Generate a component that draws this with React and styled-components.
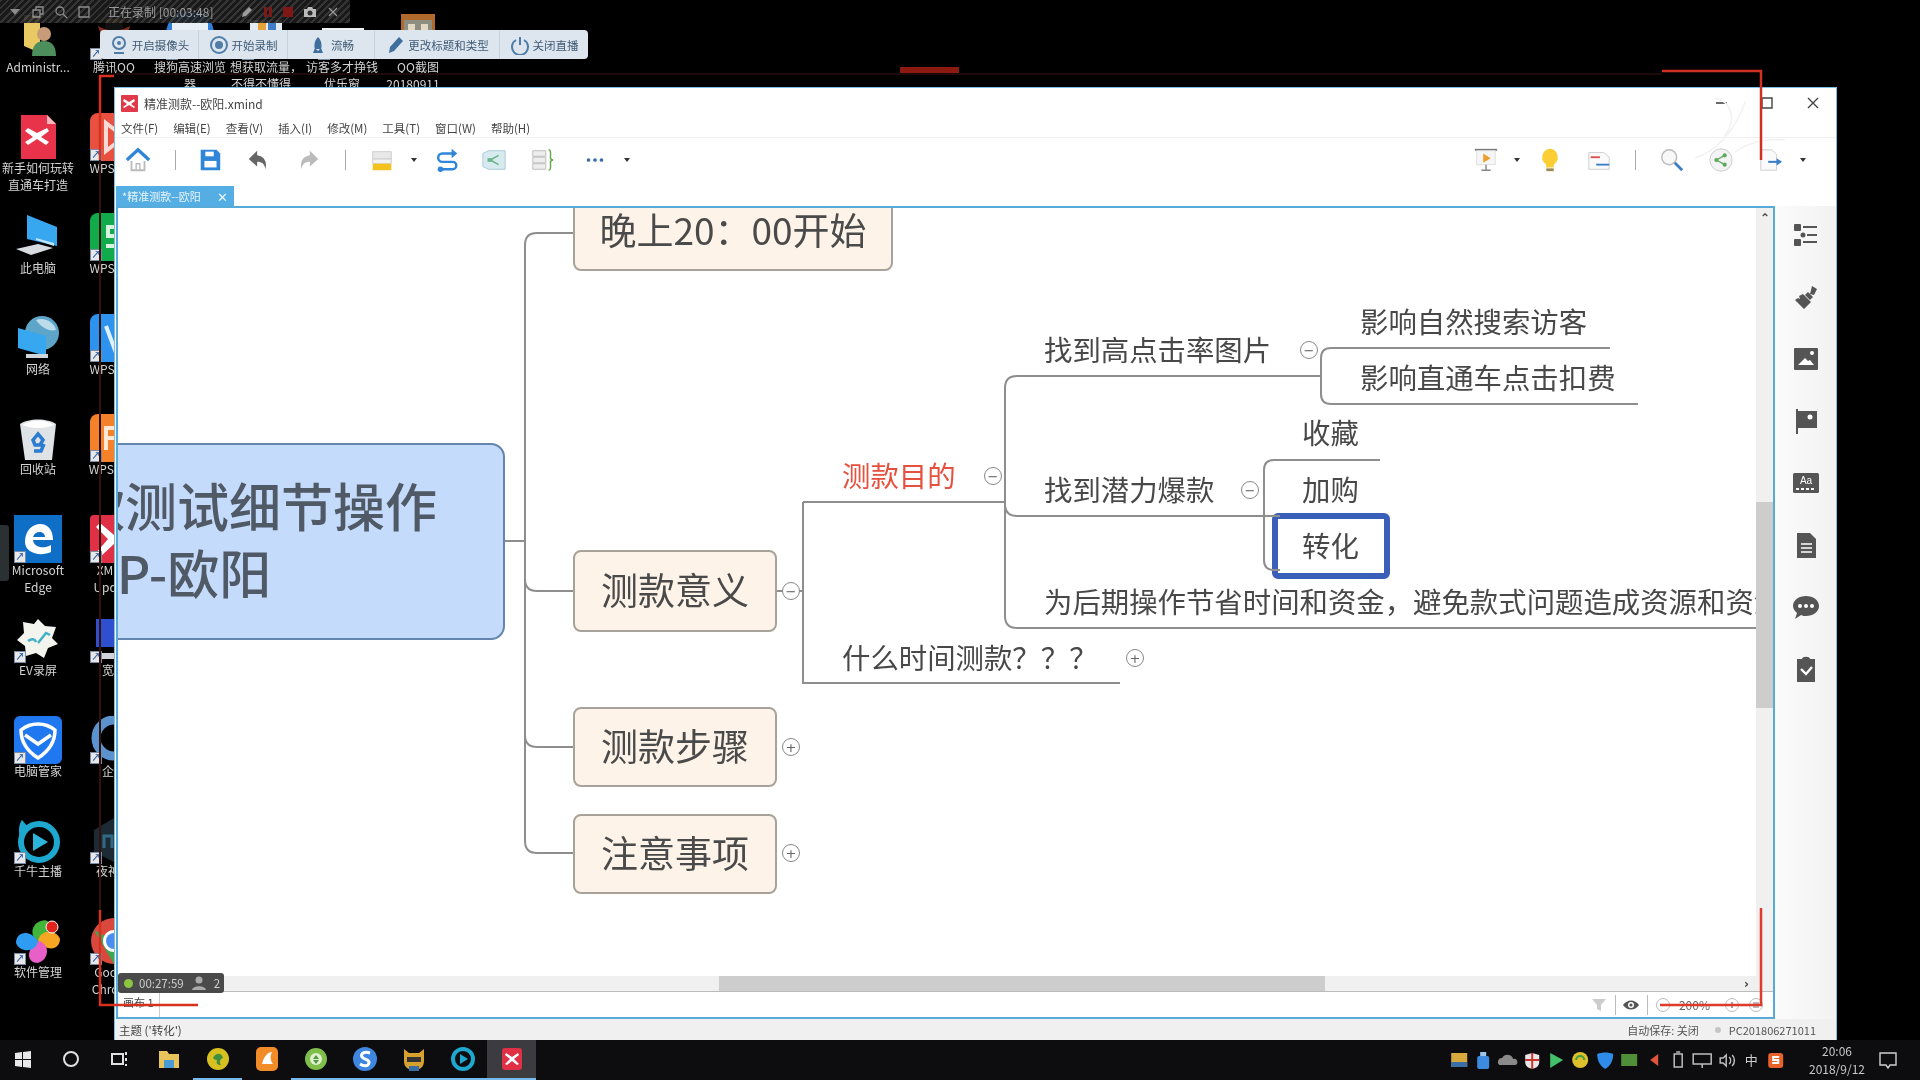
import React from "react";
import styled, { createGlobalStyle } from "styled-components";

const GlobalStyle = createGlobalStyle`
  html, body {
    margin: 0;
    padding: 0;
    background: #000;
    overflow: hidden;
  }
  * {
    box-sizing: border-box;
  }
  body {
    font-family: "Noto Sans CJK SC", "Noto Sans", sans-serif;
  }
`;

const Screen = styled.div`
  position: relative;
  width: 1920px;
  height: 1080px;
  display: flex;
  flex-direction: column;
  overflow: hidden;
  background: #000;
  filter: blur(0.55px);
`;

/* ---------- desktop ---------- */

const Desktop = styled.div`
  position: relative;
  flex: 1;
  padding-top: 2px;
`;

const IconRow = styled.div`
  display: flex;
  height: 100.5px;
`;

const DesktopItem = styled.div`
  width: 76px;
  padding-top: 10px;
  display: flex;
  flex-direction: column;
  align-items: center;
`;

const GlyphBox = styled.div`
  position: relative;
  width: 48px;
  height: 48px;
`;

const ShortcutMark = styled.span`
  position: absolute;
  left: 0;
  bottom: 0;
  width: 12px;
  height: 12px;
  background: #e8e8e8;
  border: 1px solid #7a8ba5;
  color: #2a5ca8;
  font-size: 9px;
  line-height: 10px;
  text-align: center;
  font-weight: 700;
`;

const DesktopLabel = styled.span`
  margin-top: -2px;
  width: 76px;
  color: #d4d4d4;
  font-size: 12px;
  line-height: 17px;
  text-align: center;
  white-space: pre-line;
`;

const DockHandle = styled.div`
  position: absolute;
  left: 0;
  top: 525px;
  width: 9px;
  height: 56px;
  border-radius: 0 3px 3px 0;
  background: #2b3033;
`;

const desktopGlyphs = {
  admin: (
    <svg viewBox="0 0 48 48">
      <path d="M10 3h16v38L10 34z" fill="#e8c964" />
      <circle cx="30" cy="22" r="7" fill="#c79a78" />
      <path d="M18 44c0-12 6-15 12-15s12 3 12 15z" fill="#4c8f5c" />
    </svg>
  ),
  xfile: (
    <svg viewBox="0 0 48 48">
      <path d="M7 2h26l9 9v35H7z" fill="#e8334a" />
      <path d="M33 2l9 9h-9z" fill="#f4b7be" />
      <path d="M14 15l9 5 10-5 2 3-8 6 8 5-3 3-9-6-9 6-3-3 8-5-8-6z" fill="#fff" />
    </svg>
  ),
  pc: (
    <svg viewBox="0 0 48 48">
      <path d="M13 2l30 12v19L13 26z" fill="#37a7ef" />
      <path d="M40 30L22 25v2l18 6z" fill="#bfe4fa" />
      <path d="M2 36l22-5 15 4-22 7z" fill="#d8dce0" />
    </svg>
  ),
  net: (
    <svg viewBox="0 0 48 48">
      <circle cx="28" cy="19" r="17" fill="#5da5c9" />
      <path d="M22 6c8-3 18 2 20 10-7 2-15-3-20-10z" fill="#bcdcec" />
      <path d="M4 14l28 8v20L4 34z" fill="#37a7ef" />
      <path d="M12 40h22v4H12z" fill="#cfd6dc" />
    </svg>
  ),
  bin: (
    <svg viewBox="0 0 48 48">
      <path d="M6 10c8-6 28-6 36 0l-4 36H11z" fill="#dfe3e6" />
      <path d="M8 11c10-6 22-6 32 0-10 4-22 4-32 0z" fill="#fff" />
      <path d="M19 26l5-6 5 6-3 5h-5zM30 30l-3 7h-7" stroke="#2b7bd0" strokeWidth="3.5" fill="none" />
    </svg>
  ),
  edge: (
    <svg viewBox="0 0 48 48">
      <rect width="48" height="48" fill="#0f6fc6" />
      <path d="M11 27c0-12 8-18 15-18 8 0 13 6 13 16H19c1 8 11 9 18 5v7c-11 5-26 1-26-10zm8-5h12c0-6-10-7-12 0z" fill="#fff" />
    </svg>
  ),
  ev: (
    <svg viewBox="0 0 48 48">
      <path d="M24 4l7 7 11 1-4 11 6 6-10 4-4 10-8-5-10 3-1-10-8-6 7-7-1-11 11 2z" fill="#f4f4ee" />
      <path d="M14 26c4-3 7-2 8 1M24 28l8-10 4 2" stroke="#3fb0c8" strokeWidth="2.5" fill="none" />
    </svg>
  ),
  guard: (
    <svg viewBox="0 0 48 48">
      <rect width="48" height="48" rx="6" fill="#1f78f0" />
      <path d="M7 14c10-8 24-8 34 0 0 12-6 21-17 28C13 35 7 26 7 14z" fill="none" stroke="#fff" strokeWidth="3.5" />
      <path d="M11 19l13 9 13-9" fill="none" stroke="#fff" strokeWidth="3.5" />
    </svg>
  ),
  qianniu: (
    <svg viewBox="0 0 48 48">
      <circle cx="25" cy="26" r="18" fill="none" stroke="#1ea8cf" strokeWidth="6" />
      <path d="M6 24C4 14 5 8 8 4l6 7z" fill="#1ea8cf" />
      <path d="M19 17l15 9-15 9z" fill="#2cb4dc" />
    </svg>
  ),
  soft: (
    <svg viewBox="0 0 48 48">
      <path d="M24 24C12 22 12 6 24 2c10 0 12 14 0 22z" fill="#43b53a" transform="rotate(20 24 24)" />
      <path d="M24 24c2-12 18-12 22-2 0 10-12 14-22 2z" fill="#f5a623" />
      <path d="M24 24c12 2 12 18 0 22-12 0-12-14 0-22z" fill="#e85fc8" />
      <path d="M24 24C22 36 6 36 2 26c0-12 14-14 22-2z" fill="#2e9cf0" />
      <circle cx="38" cy="10" r="6" fill="#e3241b" stroke="#fff" />
    </svg>
  ),
  wpsRed: (
    <svg viewBox="0 0 48 48">
      <rect width="48" height="48" rx="8" fill="#e8503f" />
      <path d="M16 10l18 14-18 14z" fill="none" stroke="#fbd9d4" strokeWidth="4" />
    </svg>
  ),
  wpsGreen: (
    <svg viewBox="0 0 48 48">
      <rect width="48" height="48" rx="8" fill="#12ab4b" />
      <path d="M36 14H18v9h18v10H16" fill="none" stroke="#d8f5e2" strokeWidth="4" />
    </svg>
  ),
  wpsBlue: (
    <svg viewBox="0 0 48 48">
      <rect width="48" height="48" rx="8" fill="#2e93ee" />
      <path d="M16 12l9 24 10-24" fill="none" stroke="#e2f1ff" strokeWidth="4" />
    </svg>
  ),
  wpsOrange: (
    <svg viewBox="0 0 48 48">
      <rect width="48" height="48" rx="8" fill="#f5822a" />
      <path d="M38 14H16v22M16 24h18" fill="none" stroke="#ffe8d6" strokeWidth="4" />
    </svg>
  ),
  xupd: (
    <svg viewBox="0 0 48 48">
      <rect width="48" height="48" rx="4" fill="#e03045" />
      <path d="M10 8l14 12L38 8l4 4-12 12 12 14-4 4-14-13-14 13-4-4 12-14L6 12z" fill="#fff" />
    </svg>
  ),
  wide: (
    <svg viewBox="0 0 48 48">
      <path d="M6 4h36v28H6z" fill="#2d4fd0" />
      <path d="M10 38h30v6H10z" fill="#cfd3da" />
    </svg>
  ),
  qq: (
    <svg viewBox="0 0 48 48">
      <circle cx="24" cy="22" r="18" fill="none" stroke="#5b93cf" strokeWidth="9" />
      <path d="M18 38h22v6H18z" fill="#5b93cf" />
    </svg>
  ),
  nox: (
    <svg viewBox="0 0 48 48">
      <path d="M24 2l20 12v22L24 46 4 36V14z" fill="#1c2a33" />
      <path d="M14 32V20h8v12M28 20h8v12h-8z" fill="none" stroke="#2f6a86" strokeWidth="3" />
    </svg>
  ),
  chrome: (
    <svg viewBox="0 0 48 48">
      <circle cx="24" cy="24" r="23" fill="#d8483c" />
      <path d="M4 13l20 34 20-23H24z" fill="#3aa853" />
      <circle cx="24" cy="24" r="11" fill="#fff" />
      <circle cx="24" cy="24" r="8" fill="#4a8df0" />
    </svg>
  ),
  penguin: (
    <svg viewBox="0 0 48 48">
      <path d="M14 22c0-26 20-26 20 0 6 8 6 16 2 16H12c-4 0-4-8 2-16z" fill="#111" />
      <path d="M8 14c10 6 22 6 32 0l-4 12H12z" fill="#8a3020" />
      <path d="M16 7h16v4H16z" fill="#d4a341" />
    </svg>
  ),
  sogou: (
    <svg viewBox="0 0 48 48">
      <circle cx="24" cy="22" r="24" fill="#2f7fd8" />
      <path d="M6 10h36v10H6z" fill="#e8eef5" />
    </svg>
  ),
  book: (
    <svg viewBox="0 0 48 48">
      <path d="M8 8h32v36H8z" fill="#e4ebf0" />
      <path d="M16 8h8v20h-8z" fill="#e8a23a" />
      <path d="M26 8h8v20h-8z" fill="#3f7cc9" />
    </svg>
  ),
  paper: (
    <svg viewBox="0 0 48 48">
      <path d="M4 16h42v28H4z" fill="#eef1f4" />
      <path d="M10 20h30v3H10z" fill="#9fb2c5" />
    </svg>
  ),
  code: (
    <svg viewBox="0 0 48 48">
      <rect x="7" y="2" width="34" height="34" fill="#b06a2c" />
      <rect x="10" y="8" width="28" height="26" fill="#8d8d82" />
      <path d="M14 12h7v7h-7zM27 12h7v7h-7zM14 24h7v7h-7zM26 25h8v6h-8z" fill="#e1d7c2" />
    </svg>
  ),
};

const desktopRows = [
  [
    ["admin", "Administr...", false],
    ["penguin", "腾讯QQ", true],
    ["sogou", "搜狗高速浏览\n器", true],
    ["book", "想获取流量，\n不得不懂得...", true],
    ["paper", "访客多才挣钱\n优乐窗", true],
    ["code", "QQ截图\n20180911...", false],
  ],
  [["xfile", "新手如何玩转\n直通车打造", false], ["wpsRed", "WPS演示", true]],
  [["pc", "此电脑", false], ["wpsGreen", "WPS表格", true]],
  [["net", "网络", false], ["wpsBlue", "WPS文字", true]],
  [["bin", "回收站", false], ["wpsOrange", "WPS PDF", true]],
  [["edge", "Microsoft\nEdge", true], ["xupd", "XMind\nUpdate", true]],
  [["ev", "EV录屏", true], ["wide", "宽带", true]],
  [["guard", "电脑管家", true], ["qq", "企业", true]],
  [["qianniu", "千牛主播", true], ["nox", "夜神模", true]],
  [["soft", "软件管理", true], ["chrome", "Google\nChrome", true]],
];

/* ---------- recorder overlays ---------- */

const RecorderStrip = styled.div`
  position: absolute;
  left: 0;
  top: 0;
  width: 350px;
  height: 23px;
  display: flex;
  align-items: center;
  gap: 9px;
  padding-left: 8px;
  color: #a8a8a8;
  font-size: 12px;
  background: repeating-linear-gradient(135deg, #3a3a3a 0 2px, #1c1c1c 2px 5px);
  opacity: 0.92;
`;

const StripIcon = styled.svg`
  width: ${({ $w }) => $w || 14}px;
  height: 14px;
  flex: none;
`;

const StripTime = styled.span`
  margin: 0 18px 0 8px;
  white-space: nowrap;
`;

const LiveBar = styled.div`
  position: absolute;
  left: 100px;
  top: 30px;
  width: 488px;
  height: 29px;
  display: flex;
  border-radius: 4px;
  background: #dde6ee;
`;

const LiveButton = styled.div`
  width: ${({ $w }) => $w}px;
  display: flex;
  align-items: center;
  justify-content: center;
  gap: 3px;
  color: #3f5a76;
  font-size: 11.5px;
  white-space: nowrap;
  &:not(:last-child) {
    border-right: 1px solid #c6d2dd;
  }
`;

const LiveIcon = styled.svg`
  width: 20px;
  height: 20px;
  flex: none;
`;

const liveButtons = [
  [99, "开启摄像头", <g key="a"><circle cx="10" cy="8" r="6" fill="none" stroke="#4f7da8" strokeWidth="2" /><circle cx="10" cy="8" r="2" fill="#4f7da8" /><path d="M5 18h10" stroke="#4f7da8" strokeWidth="2" /></g>],
  [89, "开始录制", <g key="b"><circle cx="10" cy="10" r="8" fill="none" stroke="#4f7da8" strokeWidth="2" /><circle cx="10" cy="10" r="4" fill="#4f7da8" /></g>],
  [87, "流畅", <path key="c" d="M10 2c4 4 4 9 3 12H7C6 11 6 6 10 2zM5 18l2-5 3 3 3-3 2 5z" fill="#3f6f9e" />],
  [125, "更改标题和类型", <path key="d" d="M4 18l1-6L14 2l4 4-9 10z" fill="#3f6f9e" />],
  [88, "关闭直播", <g key="e"><path d="M6 5a8 8 0 1 0 8 0" fill="none" stroke="#4f7da8" strokeWidth="2" /><path d="M10 2v8" stroke="#4f7da8" strokeWidth="2" /></g>],
];

const RedFrame = styled.svg`
  position: absolute;
  left: 0;
  top: 0;
  width: 1920px;
  height: 1080px;
  pointer-events: none;
`;

/* ---------- xmind window ---------- */

const Window = styled.div`
  position: absolute;
  left: 114px;
  top: 87px;
  width: 1723px;
  height: 953px;
  display: flex;
  flex-direction: column;
  background: #fff;
  border: 1px solid #7cc0e6;
  border-bottom: none;
`;

const Watermark = styled.svg`
  position: absolute;
  left: 1560px;
  top: 4px;
  width: 120px;
  height: 80px;
  pointer-events: none;
`;

const TitleBar = styled.div`
  height: 30px;
  flex: none;
  display: flex;
  align-items: center;
  padding-left: 6px;
  color: #444;
  font-size: 12px;
`;

const AppMark = styled.svg`
  width: 17px;
  height: 17px;
  margin-right: 6px;
`;

const WindowControls = styled.div`
  margin-left: auto;
  display: flex;
`;

const WindowControl = styled.svg`
  width: 46px;
  height: 16px;
`;

const MenuBar = styled.div`
  height: 20px;
  flex: none;
  display: flex;
  align-items: center;
  gap: 15px;
  padding-left: 6px;
  color: #444;
  font-size: 11.5px;
  border-bottom: 1px solid #f0f0f0;
`;

const Toolbar = styled.div`
  height: 44px;
  flex: none;
  display: flex;
  align-items: center;
`;

const ToolSlot = styled.div`
  width: ${({ $w }) => $w}px;
  margin-left: ${({ $auto }) => ($auto ? "auto" : "0")};
  flex: none;
  display: flex;
  align-items: center;
  justify-content: center;
`;

const ToolIcon = styled.svg`
  width: 26px;
  height: 26px;
  flex: none;
`;

const ToolSep = styled.span`
  width: 1px;
  height: 20px;
  background: #aaa;
`;

const Caret = styled.span`
  width: 0;
  height: 0;
  border-left: 3.5px solid transparent;
  border-right: 3.5px solid transparent;
  border-top: 4px solid #333;
`;

const TabRow = styled.div`
  height: 24px;
  flex: none;
  display: flex;
  align-items: flex-end;
  padding-left: 1px;
`;

const Tab = styled.div`
  width: 118px;
  height: 20px;
  display: flex;
  align-items: center;
  justify-content: space-between;
  padding: 0 6px 0 6px;
  color: #e8f4fc;
  font-size: 11px;
  background: #55aee3;
`;

const TabClose = styled.span`
  font-size: 13px;
  line-height: 1;
`;

const Body = styled.div`
  flex: 1;
  min-height: 0;
  display: flex;
`;

const CanvasFrame = styled.div`
  margin-left: 1px;
  width: 1659px;
  display: flex;
  flex-direction: column;
  border: 2px solid #57abd9;
`;

const MapRow = styled.div`
  flex: 1;
  min-height: 0;
  display: flex;
`;

const MapArea = styled.div`
  position: relative;
  flex: 1;
  overflow: hidden;
  background: #fff;
`;

const VScroll = styled.div`
  position: relative;
  width: 17px;
  background: #f0f0f0;
  padding-top: 294px;
`;

const ScrollThumbV = styled.div`
  height: 206px;
  background: #cdcdcd;
`;

const ScrollArrow = styled.span`
  position: absolute;
  color: #444;
  font-size: 12px;
  font-weight: 700;
  line-height: 12px;
  font-family: "DejaVu Sans", sans-serif;
  top: ${({ $top }) => $top};
  right: ${({ $right }) => $right};
`;

const HScroll = styled.div`
  position: relative;
  height: 16px;
  flex: none;
  background: #f0f0f0;
  padding-left: 601px;
  border-bottom: 1px solid #bbb;
`;

const ScrollThumbH = styled.div`
  width: 606px;
  height: 15px;
  background: #cdcdcd;
`;

const SheetBar = styled.div`
  height: 25px;
  flex: none;
  display: flex;
  align-items: center;
  background: #fff;
  color: #555;
  font-size: 11px;
`;

const SheetTab = styled.div`
  width: 40px;
  height: 25px;
  margin-left: 2px;
  padding-left: 3px;
  color: #444;
  line-height: 20px;
  border-right: 1px solid #ccc;
`;

const SheetTools = styled.div`
  margin-left: auto;
  display: flex;
  align-items: center;
  gap: 6.5px;
  margin-right: 8px;
`;

const SheetIcon = styled.svg`
  width: 18px;
  height: 16px;
  flex: none;
`;

const SheetSep = styled.span`
  width: 1px;
  height: 20px;
  background: #bbb;
`;

const ZoomText = styled.span`
  margin-right: 6px;
  color: #666;
  font-size: 12px;
`;

const SidePanel = styled.div`
  flex: 1;
  display: flex;
  flex-direction: column;
  align-items: center;
  padding-top: 15px;
  gap: 34px;
  background: linear-gradient(90deg, #fbfbfb, #f2f2f3);
`;

const SideIcon = styled.svg`
  width: 28px;
  height: 28px;
  flex: none;
`;

const StatusBar = styled.div`
  height: 21px;
  flex: none;
  display: flex;
  align-items: center;
  padding: 0 20px 0 4px;
  color: #444;
  font-size: 11.5px;
  background: #f0f0f0;
`;

const StatusRight = styled.div`
  margin-left: auto;
  display: flex;
  align-items: center;
  gap: 8px;
  color: #555;
  font-size: 11px;
`;

const StatusDot = styled.span`
  width: 6px;
  height: 6px;
  border-radius: 50%;
  background: #c5c5c5;
  margin-left: 8px;
`;

const TimerBadge = styled.div`
  position: absolute;
  left: 3px;
  top: 885px;
  width: 106px;
  height: 20px;
  display: flex;
  align-items: center;
  gap: 6px;
  padding-left: 6px;
  border-radius: 3px;
  color: #d0d0d0;
  font-size: 11.5px;
  background: rgba(60, 60, 60, 0.92);
`;

const TimerDot = styled.span`
  width: 9px;
  height: 9px;
  border-radius: 50%;
  background: #8cc63f;
`;

/* ---------- mind map, positions in page pixels minus the map's origin ---------- */

const MAP_X = 118;
const MAP_Y = 208;

const Links = styled.svg`
  position: absolute;
  left: 0;
  top: 0;
  width: 1640px;
  height: 768px;
`;

const CentralTopic = styled.div`
  position: absolute;
  left: ${40 - MAP_X}px;
  top: ${443 - MAP_Y}px;
  width: 465px;
  height: 197px;
  display: flex;
  flex-direction: column;
  justify-content: center;
  padding-bottom: 7px;
  border: 2px solid #6485ad;
  border-radius: 14px;
  color: #505a66;
  font-size: 52px;
  font-weight: 500;
  line-height: 67px;
  background: #c5dbfb;
`;

const CentralLine = styled.div`
  white-space: nowrap;
  padding-left: ${({ $pad }) => $pad}px;
`;

const MainTopic = styled.div`
  position: absolute;
  left: ${573 - MAP_X}px;
  top: ${({ $y }) => $y - MAP_Y}px;
  width: ${({ $w }) => $w}px;
  height: ${({ $h }) => $h}px;
  display: flex;
  align-items: center;
  justify-content: center;
  padding-bottom: 4px;
  border: 2px solid #a8a39a;
  border-radius: 8px;
  color: #4a4a4a;
  font-size: 37px;
  white-space: nowrap;
  background: #fdf3e8;
`;

const SubTopic = styled.div`
  position: absolute;
  left: ${({ $x }) => $x - MAP_X}px;
  top: ${({ $y }) => $y - MAP_Y}px;
  transform: translateY(calc(-50% - 1px));
  color: ${({ $red }) => ($red ? "#e5503f" : "#484848")};
  font-size: 28.4px;
  line-height: 40px;
  white-space: nowrap;
`;

const SelectedBox = styled.div`
  position: absolute;
  left: ${1272 - MAP_X}px;
  top: ${513 - MAP_Y}px;
  width: 118px;
  height: 66px;
  border: 6px solid #3a5fb8;
  border-radius: 6px;
  background: #fff;
`;

const Fold = styled.div`
  position: absolute;
  left: ${({ $x }) => $x - 9 - MAP_X}px;
  top: ${({ $y }) => $y - 9 - MAP_Y}px;
  width: 18px;
  height: 18px;
  display: flex;
  align-items: center;
  justify-content: center;
  border: 1.5px solid #888;
  border-radius: 50%;
  color: #666;
  font-size: 13px;
  font-family: "DejaVu Sans", sans-serif;
  line-height: 1;
  background: #fff;
`;

const topics = [
  { y: 191, h: 80, w: 320, text: "晚上20：00开始" },
  { y: 550, h: 82, w: 204, text: "测款意义" },
  { y: 707, h: 80, w: 204, text: "测款步骤" },
  { y: 814, h: 80, w: 204, text: "注意事项" },
];

const subtopics = [
  { x: 842, y: 476, text: "测款目的", red: true },
  { x: 842, y: 658, text: "什么时间测款？？？" },
  { x: 1044, y: 350, text: "找到高点击率图片" },
  { x: 1044, y: 490, text: "找到潜力爆款" },
  { x: 1044, y: 602, text: "为后期操作节省时间和资金，避免款式问题造成资源和资金浪费" },
  { x: 1360, y: 322, text: "影响自然搜索访客" },
  { x: 1360, y: 378, text: "影响直通车点击扣费" },
  { x: 1302, y: 433, text: "收藏" },
  { x: 1302, y: 490, text: "加购" },
  { x: 1302, y: 546, text: "转化" },
];

const folds = [
  { x: 791, y: 591, sign: "−" },
  { x: 791, y: 747, sign: "+" },
  { x: 791, y: 853, sign: "+" },
  { x: 993, y: 476, sign: "−" },
  { x: 1135, y: 658, sign: "+" },
  { x: 1309, y: 350, sign: "−" },
  { x: 1250, y: 490, sign: "−" },
];

const linkPaths = [
  "M505 541H525",
  "M573 233H537Q525 233 525 245V841Q525 853 537 853H573",
  "M525 579Q525 591 537 591H573",
  "M525 735Q525 747 537 747H573",
  "M777 591H803",
  "M803 502V683H1120",
  "M803 502H1005",
  "M1321 376H1017Q1005 376 1005 388V616Q1005 628 1017 628H1760",
  "M1005 504Q1005 516 1017 516H1280",
  "M1610 348H1331Q1321 348 1321 358V394Q1321 404 1331 404H1638",
  "M1380 460H1274Q1264 460 1264 470V560Q1264 570 1274 570H1280",
];

/* ---------- taskbar ---------- */

const Taskbar = styled.div`
  height: 40px;
  flex: none;
  display: flex;
  align-items: center;
  background: #0d0d10;
`;

const TaskSlot = styled.div`
  width: ${({ $w }) => $w || 49}px;
  height: 40px;
  flex: none;
  display: flex;
  align-items: center;
  justify-content: center;
  background: ${({ $active }) => ($active ? "#3c3c40" : "transparent")};
  border-bottom: 2px solid ${({ $open }) => ($open ? "#76b9ed" : "transparent")};
`;

const TaskIcon = styled.svg`
  width: 26px;
  height: 26px;
`;

const Tray = styled.div`
  margin-left: auto;
  display: flex;
  align-items: center;
`;

const TrayIcon = styled.svg`
  width: 24.4px;
  height: 18px;
  flex: none;
`;

const Clock = styled.div`
  width: 90px;
  margin-left: 4px;
  color: #c8c8c8;
  font-size: 12px;
  line-height: 18px;
  text-align: center;
`;

const ActionSlot = styled.svg`
  width: 20px;
  height: 20px;
  margin: 0 22px 0 -4px;
`;

const stroke = (d, color = "#666", w = 2) => <path d={d} fill="none" stroke={color} strokeWidth={w} />;

const sideIcons = [
  <g key="1" fill="#555">
    <rect x="2" y="3" width="7" height="7" rx="1" /><rect x="2" y="18" width="7" height="7" rx="1" /><circle cx="11" cy="14" r="2.5" />
    <path d="M11 5h14v2H11zM15 13h10v2H15zM11 20h14v2H11z" />
  </g>,
  <g key="2" fill="#555">
    <path d="M20 3l5 3-3 6-4-1z" /><path d="M16 9l5 5-3 3-5-5z" /><path d="M11 11l8 8-7 7-9-9 3-2 2 1-1-3z" />
  </g>,
  <g key="3">
    <rect x="2" y="3" width="24" height="22" rx="1" fill="#555" />
    <circle cx="20" cy="8" r="2" fill="#fff" /><path d="M6 20l7-7 3 3 2-1 4 5z" fill="#fff" />
  </g>,
  <g key="4">
    <path d="M4 2h2v25H4z" fill="#555" /><path d="M6 4h19v17H6z" fill="#555" /><circle cx="18" cy="10" r="2.5" fill="#fff" />
  </g>,
  <g key="5">
    <rect x="1" y="4" width="26" height="20" rx="1.5" fill="#555" />
    <text x="14" y="15" textAnchor="middle" fontSize="10" fill="#fff" fontFamily="Liberation Sans">Aa</text>
    <path d="M4 20h3M9 20h3M14 20h3M19 20h3" stroke="#fff" strokeWidth="2" />
  </g>,
  <g key="6">
    <path d="M5 2h13l6 6v19H5z" fill="#555" />
    <path d="M9 13h11M9 17h11M9 21h11" stroke="#fff" strokeWidth="1.6" />
  </g>,
  <g key="7">
    <path d="M14 3c7 0 13 4 13 10s-6 10-13 10c-2 0-3 0-5-1l-6 4 2-6c-2-2-4-4-4-7C1 7 7 3 14 3z" fill="#555" />
    <circle cx="8" cy="13" r="2" fill="#fff" /><circle cx="14" cy="13" r="2" fill="#fff" /><circle cx="20" cy="13" r="2" fill="#fff" />
  </g>,
  <g key="8">
    <path d="M5 4h5c0-3 8-3 8 0h5v23H5z" fill="#555" />
    <path d="M9 14l5 5 6-7" fill="none" stroke="#fff" strokeWidth="2.4" />
  </g>,
];

const trayIcons = [
  <g key="a"><rect x="4" y="2" width="16" height="14" fill="#d8a93c" /><path d="M4 11h16v5H4z" fill="#3a6ea5" /></g>,
  <g key="b"><rect x="6" y="5" width="12" height="13" rx="2" fill="#3d8be0" /><rect x="9" y="1" width="6" height="4" fill="#9cc6f0" /></g>,
  <path key="c" d="M4 14a4 4 0 0 1 3-7 6 6 0 0 1 11 1 3 3 0 0 1 2 6z" fill="#8a8a8a" />,
  <g key="d"><path d="M5 4l7-2 7 2v7c0 4-3 6-7 7-4-1-7-3-7-7z" fill="#e8e8e8" /><path d="M11 2h2v16h-2zM5 8h14v2H5z" fill="#c8352c" /></g>,
  <path key="e" d="M6 2l13 7-13 8z" fill="#43c06a" />,
  <g key="f"><circle cx="12" cy="9" r="8" fill="#dcc12c" /><path d="M8 9a4 4 0 0 1 8 0" stroke="#3f9f45" strokeWidth="2" fill="none" /></g>,
  <path key="g" d="M4 3c5-2 11-2 16 0 0 7-3 12-8 15C7 15 4 10 4 3z" fill="#2f8be8" />,
  <rect key="h" x="4" y="3" width="16" height="12" fill="#4f8f3a" />,
  <path key="i" d="M8 9l8-6v12z" fill="#e0553c" />,
  <g key="j" fill="none" stroke="#bdbdbd" strokeWidth="1.5"><rect x="8" y="3" width="8" height="13" /><path d="M10 1h4" /></g>,
  <g key="k" fill="none" stroke="#bdbdbd" strokeWidth="1.5"><path d="M3 3h18v10H3zM12 13v4" /></g>,
  <g key="l" fill="none" stroke="#bdbdbd" strokeWidth="1.5"><path d="M5 7v5h3l3 3V4L8 7zM14 6a5 5 0 0 1 0 7M17 4a8 8 0 0 1 0 11" /></g>,
  <text key="m" x="12" y="14" textAnchor="middle" fontSize="13" fill="#cfcfcf">中</text>,
  <g key="n"><rect x="4" y="2" width="15" height="15" rx="3" fill="#e8622a" /><path d="M15 6H9v3h5v3H8" stroke="#fff" strokeWidth="2" fill="none" /></g>,
];

const taskApps = [
  [<g key="1"><path d="M3 5h8l2 3h10v14H3z" fill="#e8c45a" /><path d="M8 14h10v8H8z" fill="#4a9ad4" /></g>, false],
  [<g key="2"><circle cx="13" cy="13" r="11" fill="#d8c020" /><path d="M8 12c3-6 9-5 10 0-3 1-4 4-2 7-4 0-5-2-4-5-2 0-3-1-4-2z" fill="#3f8f3f" /></g>, true],
  [<g key="3"><rect x="2" y="1" width="22" height="24" rx="5" fill="#f28c28" /><path d="M8 18c2-8 6-12 10-12-2 4-2 8 1 12z" fill="#fff" /></g>, false],
  [<g key="4"><circle cx="13" cy="13" r="11" fill="#7fbe4a" /><circle cx="13" cy="13" r="6" fill="#e0f0d0" /><path d="M13 9l3 4h-6zM13 18l-3-4h6z" fill="#4f9a3a" /></g>, true],
  [<g key="5"><circle cx="13" cy="13" r="12" fill="#3f86e0" /><path d="M18 7c-6-2-10 1-8 4s8 2 7 6-6 3-9 1" stroke="#fff" strokeWidth="3" fill="none" /></g>, true],
  [<g key="6"><path d="M3 3l5 4h10l5-4v12c0 6-4 9-10 9S3 21 3 15z" fill="#d8a02c" /><path d="M6 11h14v5H6z" fill="#333" /><path d="M8 20h10v5H8z" fill="#3a6ea5" /></g>, true],
  [<g key="7"><circle cx="13" cy="13" r="10" fill="none" stroke="#1ea8cf" strokeWidth="4" /><path d="M10 8l8 5-8 5z" fill="#1ea8cf" /></g>, true],
  [<g key="8"><rect x="3" y="2" width="20" height="22" rx="3" fill="#e03045" /><path d="M7 7l6 4 6-4 1 2-5 4 5 5-2 1-5-4-5 4-2-1 5-5-5-4z" fill="#fff" /></g>, true, true],
];

const T = (d, fill = "#888") => <path d={d} fill={fill} />;

export default function App() {
  return (
    <>
      <GlobalStyle />
      <Screen>
        <Desktop>
          {desktopRows.map((row, i) => (
            <IconRow key={i}>
              {row.map(([kind, label, shortcut]) => (
                <DesktopItem key={label}>
                  <GlyphBox>
                    {desktopGlyphs[kind]}
                    {shortcut && <ShortcutMark>↗</ShortcutMark>}
                  </GlyphBox>
                  <DesktopLabel>{label}</DesktopLabel>
                </DesktopItem>
              ))}
            </IconRow>
          ))}

          <DockHandle />

          <RedFrame viewBox="0 0 1920 1080">
            <path d="M100 160V910" stroke="#33110c" strokeWidth="2" fill="none" />
            <path d="M114 74H1662" stroke="#1e0a08" strokeWidth="2" fill="none" />
            <path d="M900 70H959" stroke="#8c1a10" strokeWidth="6" />
          </RedFrame>

          <Window>
            <Watermark viewBox="0 0 120 80">
              {stroke("M40 6c18 4 22 24 8 40M70 10C60 40 40 60 20 66M60 60c14-10 30-14 50-12", "#f2f2f2", 1.5)}
            </Watermark>
            <TitleBar>
              <AppMark viewBox="0 0 17 17">
                <rect width="17" height="17" rx="1" fill="#e03a4a" />
                <path d="M3 4l5 3 5-3 1 2-4 3 4 3-1 1-5-3-5 3-1-1 4-3-4-3z" fill="#fff" />
              </AppMark>
              精准测款--欧阳.xmind
              <WindowControls>
                <WindowControl viewBox="0 0 46 16">{stroke("M18 8h11", "#444", 1.6)}</WindowControl>
                <WindowControl viewBox="0 0 46 16">{stroke("M18 3h10v10H18z", "#444", 1.4)}</WindowControl>
                <WindowControl viewBox="0 0 46 16">{stroke("M18 3l10 10M28 3L18 13", "#444", 1.4)}</WindowControl>
              </WindowControls>
            </TitleBar>
            <MenuBar>
              {["文件(F)", "编辑(E)", "查看(V)", "插入(I)", "修改(M)", "工具(T)", "窗口(W)", "帮助(H)"].map((m) => (
                <span key={m}>{m}</span>
              ))}
            </MenuBar>
            <Toolbar>
              <ToolSlot $w={46}>
                <ToolIcon viewBox="0 0 28 28">
                  <path d="M2 14L14 3l12 11" fill="none" stroke="#2f86d8" strokeWidth="3.5" />
                  <path d="M7 15v10h14V15" fill="none" stroke="#bbb" strokeWidth="2" />
                  <path d="M12 25v-7h4v7" fill="none" stroke="#bbb" strokeWidth="1.5" />
                </ToolIcon>
              </ToolSlot>
              <ToolSlot $w={28}><ToolSep /></ToolSlot>
              <ToolSlot $w={42}>
                <ToolIcon viewBox="0 0 28 28">
                  <path d="M4 3h17l4 4v18H4z" fill="#2f86d8" />
                  <rect x="9" y="5" width="9" height="5" fill="#fff" />
                  <rect x="8" y="15" width="13" height="7" fill="#fff" />
                </ToolIcon>
              </ToolSlot>
              <ToolSlot $w={56}>
                <ToolIcon viewBox="0 0 28 28">
                  {T("M12 4L3 13l9 8v-5c5 0 8 2 9 8 2-9-2-14-9-15z", "#666")}
                </ToolIcon>
              </ToolSlot>
              <ToolSlot $w={42}>
                <ToolIcon viewBox="0 0 28 28">
                  {T("M16 4l9 9-9 8v-5c-5 0-8 2-9 8-2-9 2-14 9-15z", "#bbb")}
                </ToolIcon>
              </ToolSlot>
              <ToolSlot $w={32}><ToolSep /></ToolSlot>
              <ToolSlot $w={42}>
                <ToolIcon viewBox="0 0 28 28">
                  <path d="M4 5h20v8H4z" fill="#e8e8e8" stroke="#ccc" />
                  <path d="M4 13h20v5H4z" fill="#f2f2f2" stroke="#ccc" />
                  <path d="M4 18h20v7H4z" fill="#f3c21f" />
                </ToolIcon>
              </ToolSlot>
              <ToolSlot $w={22}><Caret /></ToolSlot>
              <ToolSlot $w={44}>
                <ToolIcon viewBox="0 0 28 28">
                  {stroke("M22 7H9a4 4 0 0 0 0 9h11a4 4 0 0 1 0 8H8", "#2f86d8", 2.6)}
                  {T("M19 2l6 5-6 5z", "#2f86d8")}
                  <circle cx="7" cy="24" r="3" fill="#2f86d8" />
                </ToolIcon>
              </ToolSlot>
              <ToolSlot $w={50}>
                <ToolIcon viewBox="0 0 28 28">
                  <path d="M2 7l6-3h18v20H8l-6-3z" fill="#d6eaf0" stroke="#a9c8d3" />
                  <path d="M10 14l9-5M10 14l9 5" stroke="#6bb48a" strokeWidth="1.6" />
                  <rect x="7" y="12" width="5" height="4" fill="#6bb48a" />
                </ToolIcon>
              </ToolSlot>
              <ToolSlot $w={48}>
                <ToolIcon viewBox="0 0 28 28">
                  <path d="M3 4h14v6H3zM3 11h14v6H3zM3 18h14v6H3z" fill="#eee" stroke="#bbb" />
                  {stroke("M20 3c3 0 2 5 2 8 0 2 1 3 3 3-2 0-3 1-3 3 0 3 1 8-2 8", "#6aa84f", 1.6)}
                </ToolIcon>
              </ToolSlot>
              <ToolSlot $w={56}>
                <ToolIcon viewBox="0 0 28 28">
                  <circle cx="7" cy="14" r="2" fill="#3a6ea5" />
                  <circle cx="14" cy="14" r="2" fill="#3a6ea5" />
                  <circle cx="21" cy="14" r="2" fill="#3a6ea5" />
                </ToolIcon>
              </ToolSlot>
              <ToolSlot $w={8}><Caret /></ToolSlot>

              <ToolSlot $w={50} $auto>
                <ToolIcon viewBox="0 0 28 28">
                  <path d="M2 3h24" stroke="#777" strokeWidth="2" />
                  <path d="M4 4h20v15H4z" fill="#f6f6f6" stroke="#ddd" />
                  <path d="M11 7l8 5-8 5z" fill="#eda02c" />
                  <path d="M14 19v6M9 25h10" stroke="#888" strokeWidth="1.6" />
                </ToolIcon>
              </ToolSlot>
              <ToolSlot $w={12}><Caret /></ToolSlot>
              <ToolSlot $w={54}>
                <ToolIcon viewBox="0 0 28 28">
                  <path d="M14 2a9 9 0 0 1 5 16c-1 1-1 3-1 4h-8c0-1 0-3-1-4A9 9 0 0 1 14 2z" fill="#fbcf33" />
                  <path d="M10 23h8v3h-8z" fill="#9a8a50" />
                </ToolIcon>
              </ToolSlot>
              <ToolSlot $w={44}>
                <ToolIcon viewBox="0 0 28 28">
                  <path d="M3 6h16l6 5v13H3z" fill="#fafafa" stroke="#ccc" />
                  <path d="M5 11h10" stroke="#d9534f" strokeWidth="2" />
                  <path d="M11 19h14" stroke="#3a7fc8" strokeWidth="2" />
                </ToolIcon>
              </ToolSlot>
              <ToolSlot $w={28}><ToolSep /></ToolSlot>
              <ToolSlot $w={46}>
                <ToolIcon viewBox="0 0 28 28">
                  <circle cx="11" cy="11" r="8" fill="#f8f8f8" stroke="#bbb" strokeWidth="1.6" />
                  <path d="M17 17l8 8" stroke="#3a7fc8" strokeWidth="3" />
                </ToolIcon>
              </ToolSlot>
              <ToolSlot $w={52}>
                <ToolIcon viewBox="0 0 28 28">
                  <circle cx="14" cy="14" r="12" fill="#f3f3f3" stroke="#ccc" />
                  <path d="M9 14l9-5M9 14l9 5" stroke="#5ca85c" strokeWidth="1.5" />
                  <circle cx="9" cy="14" r="2.2" fill="#5ca85c" /><circle cx="18" cy="9" r="2.2" fill="#5ca85c" /><circle cx="18" cy="19" r="2.2" fill="#5ca85c" />
                </ToolIcon>
              </ToolSlot>
              <ToolSlot $w={48}>
                <ToolIcon viewBox="0 0 28 28">
                  <path d="M3 3h12l5 5v17H3z" fill="#fafafa" stroke="#ccc" />
                  <path d="M11 16h12" stroke="#3a7fc8" strokeWidth="2.2" />
                  <path d="M20 12l6 4-6 4z" fill="#3a7fc8" />
                </ToolIcon>
              </ToolSlot>
              <ToolSlot $w={16}><Caret /></ToolSlot>
              <ToolSlot $w={25} />
            </Toolbar>
            <TabRow>
              <Tab>
                *精准测款--欧阳
                <TabClose>✕</TabClose>
              </Tab>
            </TabRow>
            <Body>
              <CanvasFrame>
                <MapRow>
                  <MapArea>
                    <SelectedBox />
                    <Links viewBox={`${MAP_X} ${MAP_Y} 1640 768`}>
                      {linkPaths.map((d) => (
                        <path key={d} d={d} fill="none" stroke="#8e8e8e" strokeWidth="2" />
                      ))}
                    </Links>
                    <CentralTopic>
                      <CentralLine $pad={31}>款测试细节操作</CentralLine>
                      <CentralLine $pad={4}>SOP-欧阳</CentralLine>
                    </CentralTopic>
                    {topics.map((t) => (
                      <MainTopic key={t.text} $y={t.y} $w={t.w} $h={t.h}>
                        {t.text}
                      </MainTopic>
                    ))}
                    {subtopics.map((s) => (
                      <SubTopic key={s.text} $x={s.x} $y={s.y} $red={s.red}>
                        {s.text}
                      </SubTopic>
                    ))}
                    {folds.map((f) => (
                      <Fold key={`${f.x}-${f.y}`} $x={f.x} $y={f.y}>
                        {f.sign}
                      </Fold>
                    ))}
                  </MapArea>
                  <VScroll>
                    <ScrollArrow $top="4px" $right="3px">⌃</ScrollArrow>
                    <ScrollThumbV />
                  </VScroll>
                </MapRow>
                <HScroll>
                  <ScrollThumbH />
                  <ScrollArrow $top="2px" $right="24px">›</ScrollArrow>
                </HScroll>
                <SheetBar>
                  <SheetTab>画布 1</SheetTab>
                  <SheetTools>
                    <SheetIcon viewBox="0 0 18 16">{T("M2 2h14l-5 6v6l-4-2V8z", "#ccc")}</SheetIcon>
                    <SheetSep />
                    <SheetIcon viewBox="0 0 18 16">
                      <path d="M1 8c4-6 12-6 16 0-4 6-12 6-16 0z" fill="#555" />
                      <circle cx="9" cy="8" r="3" fill="#fff" />
                      <circle cx="9" cy="8" r="1.6" fill="#555" />
                    </SheetIcon>
                    <SheetSep />
                    <SheetIcon viewBox="0 0 18 16">
                      <circle cx="9" cy="8" r="6.5" fill="none" stroke="#bbb" />
                      {stroke("M6 8h6", "#777", 1.4)}
                    </SheetIcon>
                    <ZoomText>200%</ZoomText>
                    <SheetIcon viewBox="0 0 18 16">
                      <circle cx="9" cy="8" r="6.5" fill="none" stroke="#bbb" />
                      {stroke("M6 8h6M9 5v6", "#777", 1.4)}
                    </SheetIcon>
                    <SheetIcon viewBox="0 0 18 16">
                      <circle cx="9" cy="8" r="6.5" fill="none" stroke="#bbb" />
                      {stroke("M6 6h6M6 10h6", "#777", 1.2)}
                    </SheetIcon>
                  </SheetTools>
                </SheetBar>
              </CanvasFrame>
              <SidePanel>
                {sideIcons.map((icon) => (
                  <SideIcon key={icon.key} viewBox="0 0 28 28">
                    {icon}
                  </SideIcon>
                ))}
              </SidePanel>
            </Body>
            <StatusBar>
              主题 ('转化')
              <StatusRight>
                自动保存: 关闭
                <StatusDot />
                PC201806271011
              </StatusRight>
            </StatusBar>
            <TimerBadge>
              <TimerDot />
              00:27:59
              <SheetIcon viewBox="0 0 18 16">
                <circle cx="9" cy="5" r="3.5" fill="#aaa" />
                <path d="M2 15c1-5 13-5 14 0z" fill="#aaa" />
              </SheetIcon>
              2
            </TimerBadge>
          </Window>

          <RedFrame viewBox="0 0 1920 1080">
            <path d="M100 160V76H114" stroke="#d8301f" strokeWidth="2.5" fill="none" />
            <path d="M100 910V1005H198" stroke="#d8301f" strokeWidth="2.5" fill="none" />
            <path d="M1662 71H1761V160" stroke="#cf3022" strokeWidth="2.5" fill="none" />
            <path d="M1761 908V1005H1660" stroke="#e03a2c" strokeWidth="2.5" fill="none" />
          </RedFrame>

          <RecorderStrip>
            <StripIcon viewBox="0 0 14 14">{T("M2 4h10L7 10z", "#999")}</StripIcon>
            <StripIcon viewBox="0 0 14 14">{stroke("M2 5h7v7H2zM5 5V2h7v7H9", "#999", 1.3)}</StripIcon>
            <StripIcon viewBox="0 0 14 14">
              <circle cx="6" cy="6" r="4" fill="none" stroke="#999" strokeWidth="1.3" />
              {stroke("M9 9l4 4", "#999", 1.3)}
            </StripIcon>
            <StripIcon viewBox="0 0 14 14">{stroke("M2 2h10v10H2z", "#999", 1.3)}</StripIcon>
            <StripTime>正在录制 [00:03:48]</StripTime>
            <StripIcon viewBox="0 0 14 14">{T("M2 12l1-4 6-6 3 3-6 6z", "#aaa")}</StripIcon>
            <StripIcon $w={10} viewBox="0 0 10 14">{T("M1 2h3v10H1zM6 2h3v10H6z", "#8a1a1a")}</StripIcon>
            <StripIcon $w={12} viewBox="0 0 12 14">{T("M1 2h10v10H1z", "#8a1a1a")}</StripIcon>
            <StripIcon viewBox="0 0 14 14">
              <path d="M1 4h3l1-2h4l1 2h3v8H1z" fill="#ccc" />
              <circle cx="7" cy="8" r="2.5" fill="#333" />
            </StripIcon>
            <StripIcon viewBox="0 0 14 14">{stroke("M3 3l8 8M11 3l-8 8", "#aaa", 1.2)}</StripIcon>
          </RecorderStrip>

          <LiveBar>
            {liveButtons.map(([w, label, icon]) => (
              <LiveButton key={label} $w={w}>
                <LiveIcon viewBox="0 0 20 20">{icon}</LiveIcon>
                {label}
              </LiveButton>
            ))}
          </LiveBar>
        </Desktop>

        <Taskbar>
          <TaskSlot $w={46}>
            <TaskIcon viewBox="0 0 26 26">{T("M5 7l7-1v7H5zM13 6l8-1v8h-8zM5 14h7v7l-7-1zM13 14h8v8l-8-1z", "#e8e8e8")}</TaskIcon>
          </TaskSlot>
          <TaskSlot>
            <TaskIcon viewBox="0 0 26 26">
              <circle cx="13" cy="13" r="7" fill="none" stroke="#e0e0e0" strokeWidth="2" />
            </TaskIcon>
          </TaskSlot>
          <TaskSlot>
            <TaskIcon viewBox="0 0 26 26">{stroke("M5 8h11v10H5zM19 6v3M19 12v3M19 18v2", "#e0e0e0", 2)}</TaskIcon>
          </TaskSlot>
          {taskApps.map(([icon, open, active]) => (
            <TaskSlot key={icon.key} $open={open} $active={active}>
              <TaskIcon viewBox="0 0 26 26">{icon}</TaskIcon>
            </TaskSlot>
          ))}
          <Tray>
            {trayIcons.map((icon) => (
              <TrayIcon key={icon.key} viewBox="0 0 24 18">
                {icon}
              </TrayIcon>
            ))}
            <Clock>
              20:06
              <br />
              2018/9/12
            </Clock>
            <ActionSlot viewBox="0 0 20 20">{stroke("M2 3h16v12h-6l-2 3-2-3H2z", "#d0d0d0", 1.4)}</ActionSlot>
          </Tray>
        </Taskbar>
      </Screen>
    </>
  );
}
